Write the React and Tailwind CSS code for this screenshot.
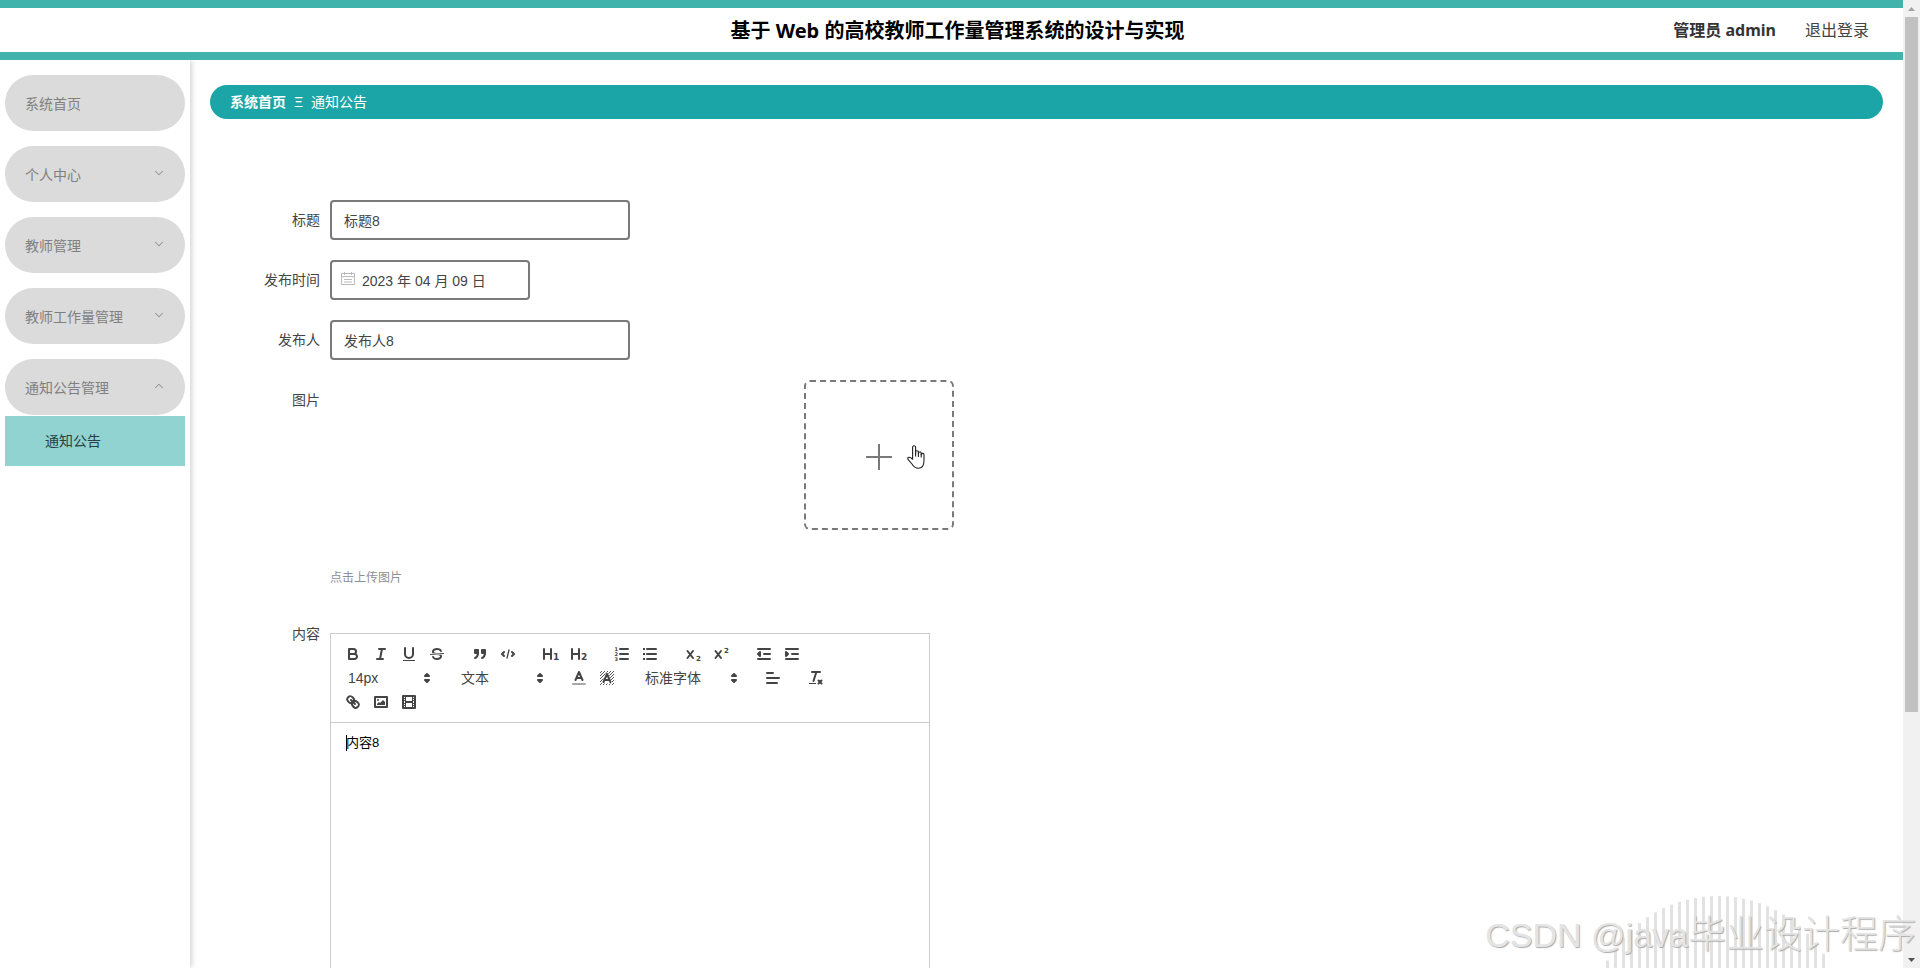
import React, { useState } from "react";
import { ChevronDown, ChevronUp } from "lucide-react";

const menus = [
  { name: "系统首页" },
  { name: "个人中心", children: [] },
  { name: "教师管理", children: [] },
  { name: "教师工作量管理", children: [] },
  { name: "通知公告管理", children: ["通知公告"] },
];

/* ---------- toolbar icons, all on an 18x18 grid ---------- */

const Icon = ({ children }) => (
  <svg
    viewBox="0 0 18 18"
    className="w-[18px] h-[18px]"
    fill="none"
    stroke="#444"
    strokeWidth="2"
    strokeLinecap="round"
    strokeLinejoin="round"
    aria-hidden="true"
  >
    {children}
  </svg>
);

const Digit = ({ x, y, size, children }) => (
  <text x={x} y={y} fontSize={size} fontWeight="bold" fontFamily="DejaVu Sans, sans-serif" fill="#444" stroke="none">
    {children}
  </text>
);

const icons = {
  bold: (
    <Icon>
      <path d="M5,4H9.5A2.5,2.5,0,0,1,12,6.5v0A2.5,2.5,0,0,1,9.5,9H5V4Z" />
      <path d="M5,9h5.5A2.5,2.5,0,0,1,13,11.5v0A2.5,2.5,0,0,1,10.5,14H5V9Z" />
    </Icon>
  ),
  italic: (
    <Icon>
      <path d="M7 4H13M5 14H11M8 14L10 4" />
    </Icon>
  ),
  underline: (
    <Icon>
      <path d="M5,3V9a4.012,4.012,0,0,0,4,4H9a4.012,4.012,0,0,0,4-4V3" />
      <rect x="3" y="15" width="12" height="1" fill="#444" stroke="none" />
    </Icon>
  ),
  strike: (
    <Icon>
      <path d="M15.5 8.5L2.5 9.5" strokeWidth="1" />
      <g fill="#444" stroke="none">
        <path d="M9.007,8C6.542,7.791,6,7.519,6,6.5,6,5.792,7.283,5,9,5c1.571,0,2.765.679,2.969,1.309a1,1,0,0,0,1.9-.617C13.356,4.106,11.354,3,9,3,6.2,3,4,4.538,4,6.5a3.2,3.2,0,0,0,.5,1.843Z" />
        <path d="M8.984,10C11.457,10.208,12,10.479,12,11.5c0,0.708-1.283,1.5-3,1.5-1.571,0-2.765-.679-2.969-1.309a1,1,0,1,0-1.9.617C4.644,13.894,6.646,15,9,15c2.8,0,5-1.538,5-3.5a3.2,3.2,0,0,0-.5-1.843Z" />
      </g>
    </Icon>
  ),
  quote: (
    <Icon>
      <rect x="4" y="5" width="3" height="3" fill="#444" />
      <rect x="11" y="5" width="3" height="3" fill="#444" />
      <path d="M7,8c0,4.031-3,5-3,5M14,8c0,4.031-3,5-3,5" fill="#444" />
    </Icon>
  ),
  code: (
    <Icon>
      <path d="M5 7L3 9L5 11M13 7L15 9L13 11" />
      <path d="M10 5L8 13" strokeWidth="1.3" />
    </Icon>
  ),
  h1: (
    <Icon>
      <path d="M2 4V14M9 4V14M2 9H9" />
      <Digit x="11" y="15" size="9">1</Digit>
    </Icon>
  ),
  h2: (
    <Icon>
      <path d="M2 4V14M9 4V14M2 9H9" />
      <Digit x="11" y="15" size="9">2</Digit>
    </Icon>
  ),
  ordered: (
    <Icon>
      <path d="M7 4H15M7 9H15M7 14H15" />
      <Digit x="1.5" y="6" size="5">1</Digit>
      <Digit x="1.5" y="11" size="5">2</Digit>
      <Digit x="1.5" y="16" size="5">3</Digit>
    </Icon>
  ),
  bullet: (
    <Icon>
      <path d="M6 4H15M6 9H15M6 14H15" />
      <path d="M2 4H4M2 9H4M2 14H4" strokeLinecap="butt" />
    </Icon>
  ),
  sub: (
    <Icon>
      <path d="M3.5 6L9 13M9 6L3.5 13" />
      <Digit x="12" y="16" size="7">2</Digit>
    </Icon>
  ),
  sup: (
    <Icon>
      <path d="M3.5 6L9 13M9 6L3.5 13" />
      <Digit x="12" y="8" size="7">2</Digit>
    </Icon>
  ),
  outdent: (
    <Icon>
      <path d="M3 4H15M3 14H15M9 9H15" />
      <path d="M5 7V11L3 9Z" fill="#444" />
    </Icon>
  ),
  indent: (
    <Icon>
      <path d="M3 4H15M3 14H15M9 9H15" />
      <path d="M3 7V11L5 9Z" fill="#444" />
    </Icon>
  ),
  color: (
    <Icon>
      <path d="M3 15H15" stroke="#a8a8a8" />
      <path d="M5.5 11L9 3L12.5 11M11.6 9H6.4" />
    </Icon>
  ),
  background: (
    <Icon>
      <defs>
        <pattern id="hatch" width="3" height="3" patternUnits="userSpaceOnUse">
          <path d="M-1 1L1 -1M0 3L3 0M2 4L4 2" stroke="#444" strokeWidth="0.9" />
        </pattern>
      </defs>
      <rect x="2" y="2" width="14" height="14" fill="url(#hatch)" stroke="none" />
      <path d="M5.5 13L9 5L12.5 13Z" fill="#fff" stroke="#fff" strokeWidth="3" />
      <path d="M5.5 13L9 5L12.5 13M11.6 11H6.4" />
    </Icon>
  ),
  align: (
    <Icon>
      <path d="M3 9H15M3 14H13M3 4H9" />
    </Icon>
  ),
  clean: (
    <Icon>
      <path d="M5 3H13M6.5 12L9.35 3" />
      <path d="M11.5 11.5L14.5 14.5M14.5 11.5L11.5 14.5" />
      <rect x="2" y="14" width="7" height="1" fill="#444" stroke="none" />
    </Icon>
  ),
  link: (
    <Icon>
      <path d="M7 7L11 11" />
      <path d="M8.9,4.577a3.476,3.476,0,0,1,.36,4.679A3.476,3.476,0,0,1,4.577,8.9C3.185,7.5,2.035,6.4,4.217,4.217S7.5,3.185,8.9,4.577Z" />
      <path d="M13.423,9.1a3.476,3.476,0,0,0-4.679-.36,3.476,3.476,0,0,0,.36,4.679c1.392,1.392,2.5,2.542,4.679.36S14.815,10.5,13.423,9.1Z" />
    </Icon>
  ),
  image: (
    <Icon>
      <rect x="3" y="4" width="12" height="10" />
      <circle cx="6" cy="7" r="1" fill="#444" stroke="none" />
      <path d="M5 12V11L7 9L8 10L11 7L13 9V12Z" fill="#444" stroke="none" />
    </Icon>
  ),
  video: (
    <Icon>
      <rect x="3" y="3" width="12" height="12" />
      <g fill="#444" stroke="none">
        <rect x="5" y="3" width="1" height="12" />
        <rect x="12" y="3" width="1" height="12" />
        <rect x="5" y="8" width="8" height="2" />
        <path d="M3 5h3v1H3zM3 7h3v1H3zM3 10h3v1H3zM3 12h3v1H3zM12 5h3v1h-3zM12 7h3v1h-3zM12 10h3v1h-3zM12 12h3v1h-3z" />
      </g>
    </Icon>
  ),
};

const Group = ({ items }) => (
  <div className="flex mr-[15px]">
    {items.map((key) => (
      <button key={key} type="button" aria-label={key} className="w-7 h-6 px-[5px] py-[3px]">
        {icons[key]}
      </button>
    ))}
  </div>
);

const Picker = ({ label, value, width }) => (
  <div className={`relative h-6 mr-[15px] ${width}`}>
    <select
      aria-label={label}
      defaultValue={value}
      className="w-full h-6 pl-[9px] appearance-none bg-transparent text-sm text-[#444] outline-none"
    >
      <option>{value}</option>
    </select>
    <span className="absolute right-px top-[3px] pointer-events-none">
      <Icon>
        <path d="M7 11L9 13L11 11ZM7 7L9 5L11 7Z" fill="#444" />
      </Icon>
    </span>
  </div>
);

/* ---------- page parts ---------- */

const Header = () => (
  <header className="relative z-20 flex items-center justify-center h-[60px] shrink-0 border-y-8 border-[#40b3ad] bg-white pl-3 pt-[2px] font-['Noto_Sans','Noto_Sans_CJK_SC',sans-serif]">
    <h1 className="text-xl font-bold text-black">基于 Web 的高校教师工作量管理系统的设计与实现</h1>
    <div className="absolute right-[34px] inset-y-0 flex items-center gap-[29px] text-base">
      <span className="font-bold text-[#333]">管理员 admin</span>
      <a href="#logout" className="text-[#444]">退出登录</a>
    </div>
  </header>
);

const Sidebar = ({ open, setOpen }) => (
  <nav className="w-[190px] shrink-0 px-[5px] pt-[15px] shadow-[1px_0_6px_#c8c8c8] z-10 bg-white">
    {menus.map((menu) => {
      const active = open === menu.name;
      return (
        <div key={menu.name} className="mb-[15px]">
          <button
            type="button"
            onClick={() => setOpen(active ? "" : menu.name)}
            className="flex items-center justify-between w-full h-14 pl-5 pr-[19px] pt-[2px] rounded-full bg-[#dbdbdb] text-sm text-[#808080]"
          >
            {menu.name}
            {menu.children &&
              (active ? (
                <ChevronUp size={14} strokeWidth={1.8} className="mb-1 text-[#909399]" />
              ) : (
                <ChevronDown size={14} strokeWidth={1.8} className="mb-1 text-[#909399]" />
              ))}
          </button>
          {active &&
            menu.children?.map((child) => (
              <a key={child} href="#notice" className="flex items-center h-[50px] mt-px pl-10 bg-[#90d3d1] text-sm text-[#2b3f40]">
                {child}
              </a>
            ))}
        </div>
      );
    })}
  </nav>
);

const inputStyle = "h-10 border-2 border-[#797979] rounded text-sm text-[#444] outline-none bg-white";

const Field = ({ label, id, children }) => (
  <div className="flex mb-5">
    <label htmlFor={id} className="w-[110px] pr-[10px] shrink-0 text-right text-sm leading-10 text-[#444]">
      {label}
    </label>
    {children}
  </div>
);

const CalendarIcon = () => (
  <svg viewBox="0 0 14 14" className="w-[14px] h-[14px]" fill="none" stroke="#bbb" strokeWidth="1" aria-hidden="true">
    <path d="M.5 1.5H13.5V12.5H.5ZM.5 4.5H13.5M3.5 0V3M10.5 0V3M3 7.5H11M3 10H11" />
  </svg>
);

const HandPointer = () => (
  <svg viewBox="0 0 18 24" className="absolute left-[101px] top-[63px] w-[18px] h-[24px]" aria-hidden="true">
    <path
      d="M5.6 14.2V2.3C5.6 .2 8.6 .2 8.6 2.3V8.2V6.8C8.8 5.2 11.3 5.4 11.4 7V8.4C11.6 6.4 14.1 6.6 14.2 8V9.6C14.5 7.8 17 8 17 9.8V15.5C17 20 15 23.2 11.3 23.2C7.8 23.2 6.6 21.6 5 19L1 14.4C.2 12.6 1.6 11.8 3.2 12.4Z"
      fill="#fff"
      stroke="#222"
      strokeWidth="1.1"
      strokeLinejoin="round"
    />
    <path d="M8.6 7V11.5M11.4 8V12M14.2 9V12.4" stroke="#222" strokeWidth="1.1" />
  </svg>
);

const Editor = () => (
  <div className="w-[600px] border border-[#ccc]">
    <div className="flex flex-wrap p-2 border-b border-[#ccc]">
      <Group items={["bold", "italic", "underline", "strike"]} />
      <Group items={["quote", "code"]} />
      <Group items={["h1", "h2"]} />
      <Group items={["ordered", "bullet"]} />
      <Group items={["sub", "sup"]} />
      <Group items={["outdent", "indent"]} />
      <Picker label="字号" value="14px" width="w-[98px]" />
      <Picker label="标题" value="文本" width="w-[98px]" />
      <Group items={["color", "background"]} />
      <Picker label="字体" value="标准字体" width="w-[108px]" />
      <Group items={["align"]} />
      <Group items={["clean"]} />
      <Group items={["link", "image", "video"]} />
    </div>
    <div className="relative">
      <textarea
        id="content"
        defaultValue="内容8"
        className="block w-full h-[400px] px-[15px] py-3 text-[13px] leading-4 text-black resize-none outline-none"
      />
      {/* text caret */}
      <span className="absolute left-[15px] top-3 w-px h-4 bg-black" />
    </div>
  </div>
);

const Scrollbar = () => (
  <div className="flex flex-col items-center w-[17px] shrink-0 bg-[#f1f1f1]" aria-hidden="true">
    <svg viewBox="0 0 17 17" className="w-[17px] h-[17px] shrink-0">
      <path d="M5 11L8.5 7L12 11Z" fill="#a3a3a3" />
    </svg>
    <div className="w-[13px] h-[71.8%] bg-[#c1c1c1]" />
    <svg viewBox="0 0 17 17" className="w-[17px] h-[17px] shrink-0 mt-auto">
      <path d="M5 7L8.5 11L12 7Z" fill="#505050" />
    </svg>
  </div>
);

const Watermark = () => {
  const r = 126;
  const bars = Array.from({ length: 29 }, (_, i) => 3 + i * 8);
  return (
    <div className="absolute right-0 bottom-0 z-20 w-[434px] h-[72px] pointer-events-none">
      <svg viewBox="0 0 230 72" className="absolute left-[117px] top-0 w-[230px] h-[72px]">
        {bars.map((x) => {
          const y = r - Math.sqrt(r * r - (x - 113) * (x - 113));
          return <rect key={x} x={x} y={y} width="3" height={72 - y} fill="#e2e2e2" />;
        })}
      </svg>
      <p className="absolute right-[4px] top-[14px] flex items-baseline whitespace-nowrap leading-12 text-[#e4e4e4] [text-shadow:1px_1px_1px_#aaa]">
        <span className="text-[34px] whitespace-pre">CSDN @java</span>
        <span className="text-[38px] font-light">毕业设计程序</span>
      </p>
    </div>
  );
};

export default function App() {
  const [open, setOpen] = useState("通知公告管理");

  return (
    <div className="relative flex h-screen overflow-hidden bg-white font-['Liberation_Sans','Noto_Sans_CJK_SC',sans-serif]">
      <div className="flex flex-col flex-1 min-w-0">
        <Header />

        <div className="flex flex-1 min-h-0">
          <Sidebar open={open} setOpen={setOpen} />

          <main className="flex-1 min-w-0 overflow-hidden pl-5 pr-5 pt-[25px]">
            {/* Breadcrumb */}
            <div className="flex items-center h-[34px] px-5 rounded-full bg-[#1ca5a7] text-sm text-white">
              <a href="#home" className="font-bold">系统首页</a>
              <span className="mx-2">Ξ</span>
              <span>通知公告</span>
            </div>

            <form className="mt-[81px] ml-[10px]" onSubmit={(e) => e.preventDefault()}>
              <Field label="标题" id="title">
                <input id="title" defaultValue="标题8" className={`${inputStyle} w-[300px] px-3`} />
              </Field>

              <Field label="发布时间" id="date">
                <div className="relative">
                  <input id="date" defaultValue="2023 年 04 月 09 日" className={`${inputStyle} w-[200px] pl-[30px] pr-3`} />
                  <span className="absolute left-[11px] top-3">
                    <CalendarIcon />
                  </span>
                </div>
              </Field>

              <Field label="发布人" id="author">
                <input id="author" defaultValue="发布人8" className={`${inputStyle} w-[300px] px-3`} />
              </Field>

              {/* Image upload */}
              <Field label="图片" id="upload">
                <div className="flex-1 max-w-[1098px]">
                  <button
                    id="upload"
                    type="button"
                    className="relative flex items-center justify-center w-[150px] h-[150px] pt-1 mx-auto border-2 border-dashed border-[#797979] rounded-md"
                  >
                    <svg viewBox="0 0 26 26" className="w-[26px] h-[26px]" stroke="#797979" strokeWidth="2" aria-hidden="true">
                      <path d="M13 0V26M0 13H26" />
                    </svg>
                    <HandPointer />
                  </button>
                  <p className="mt-10 mb-4 text-xs leading-4 text-[#8e8e9a]">点击上传图片</p>
                </div>
              </Field>

              {/* Rich text */}
              <div className="flex">
                <label htmlFor="content" className="w-[110px] pr-[10px] shrink-0 text-right text-sm leading-6 text-[#444]">
                  内容
                </label>
                <div className="pt-[11px]">
                  <Editor />
                </div>
              </div>
            </form>
          </main>
        </div>
      </div>

      <Scrollbar />
      <Watermark />
    </div>
  );
}
